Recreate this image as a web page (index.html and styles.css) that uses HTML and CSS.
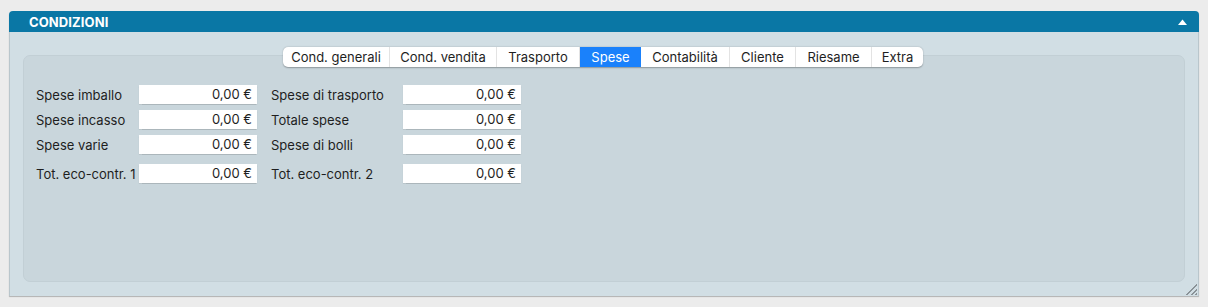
FILE: index.html
```html
<!DOCTYPE html>
<html>
<head>
<meta charset="utf-8">
<link rel="stylesheet" href="styles.css">
</head>
<body>
<div class="panel">
  <div class="header">
    <span class="title">CONDIZIONI</span>
    <svg class="caret" width="9" height="6" viewBox="0 0 9 6"><polygon points="0,6 4.5,0.5 9,6" fill="#fff"/></svg>
  </div>
  <div class="body">
    <div class="box">
      <div class="tabs">
        <div class="tab w1">Cond. generali</div>
        <div class="tab w2">Cond. vendita</div>
        <div class="tab w3">Trasporto</div>
        <div class="tab w4 active">Spese</div>
        <div class="tab w5">Contabilità</div>
        <div class="tab w6">Cliente</div>
        <div class="tab w7">Riesame</div>
        <div class="tab w8">Extra</div>
      </div>
      <div class="form">
        <div class="row">
          <span class="lbl l1">Spese imballo</span><span class="inp">0,00 €</span>
          <span class="lbl l2">Spese di trasporto</span><span class="inp">0,00 €</span>
        </div>
        <div class="row">
          <span class="lbl l1">Spese incasso</span><span class="inp">0,00 €</span>
          <span class="lbl l2">Totale spese</span><span class="inp">0,00 €</span>
        </div>
        <div class="row">
          <span class="lbl l1">Spese varie</span><span class="inp">0,00 €</span>
          <span class="lbl l2">Spese di bolli</span><span class="inp">0,00 €</span>
        </div>
        <div class="row last">
          <span class="lbl l1">Tot. eco-contr. 1</span><span class="inp">0,00 €</span>
          <span class="lbl l2">Tot. eco-contr. 2</span><span class="inp">0,00 €</span>
        </div>
      </div>
    </div>
    <div class="grip"></div>
  </div>
</div>
</body>
</html>
```

FILE: styles.css
```css
html, body {
  margin: 0;
  padding: 0;
  background: #ececec;
  font-family: Inter, "Liberation Sans", sans-serif;
}
body {
  padding: 11px 9px 0 9px;
  height: 307px;
  box-sizing: border-box;
}
.panel {
  width: 1190px;
  border-radius: 4px 4px 0 0;
  box-shadow: 0 1px 1px rgba(0,0,0,0.25);
  overflow: hidden;
}
.header {
  height: 21px;
  background: #0a77a5;
  display: flex;
  align-items: center;
  justify-content: space-between;
  padding: 0 12px 0 20px;
}
.title {
  color: #fff;
  font-weight: 700;
  font-size: 13px;
  letter-spacing: 0.1px;
}
.caret { margin-top: 1px; }
.body {
  background: #d1dee4;
  padding: 23px 13px 14px 13px;
  border-left: 1px solid #b9c6cc;
  border-right: 1px solid #b9c6cc;
  position: relative;
  height: 264px;
  box-sizing: border-box;
}
.box {
  background: #c9d6dc;
  border: 1px solid #c2cfd5;
  border-radius: 7px;
  height: 227px;
  box-sizing: border-box;
  position: relative;
}
.tabs {
  position: absolute;
  top: -9px;
  left: 259px;
  display: flex;
  background: #fff;
  border-radius: 5px;
  height: 20px;
  box-shadow: 0 0.5px 1.5px rgba(0,0,0,0.3);
  overflow: hidden;
}
.tab {
  font-size: 13px;
  color: #1e1e1e;
  display: flex;
  align-items: center;
  justify-content: center;
  border-right: 1px solid #e3e3e3;
  box-sizing: border-box;
}
.tab:last-child { border-right: none; }
.tab.active { background: #1a81fb; color: #fff; border-right: none; }
.w1 { width: 107px; }
.w2 { width: 107px; }
.w3 { width: 83px; }
.w4 { width: 61px; }
.w5 { width: 89px; }
.w6 { width: 66px; }
.w7 { width: 76px; }
.w8 { width: 51px; }
.form {
  padding: 29px 0 0 12px;
  display: flex;
  flex-direction: column;
  gap: 6px;
}
.row {
  display: flex;
  align-items: center;
  height: 19px;
}
.row.last { margin-top: 4px; }
.lbl {
  font-size: 13px;
  color: #1e1e1e;
}
.l1 { width: 103px; }
.l2 { width: 132px; margin-left: 14px; }
.inp {
  width: 118px;
  height: 19px;
  background: #fff;
  box-sizing: border-box;
  font-size: 13px;
  color: #1e1e1e;
  text-align: right;
  padding-right: 5px;
  line-height: 19px;
  box-shadow: 0 0.5px 1px rgba(0,0,0,0.15);
}
.grip {
  position: absolute;
  right: 1px;
  bottom: 1px;
  width: 13px;
  height: 13px;
  background: repeating-linear-gradient(135deg, transparent 0 1.5px, #8a9297 1.5px 3px);
  clip-path: polygon(100% 0, 100% 100%, 0 100%);
}
```
